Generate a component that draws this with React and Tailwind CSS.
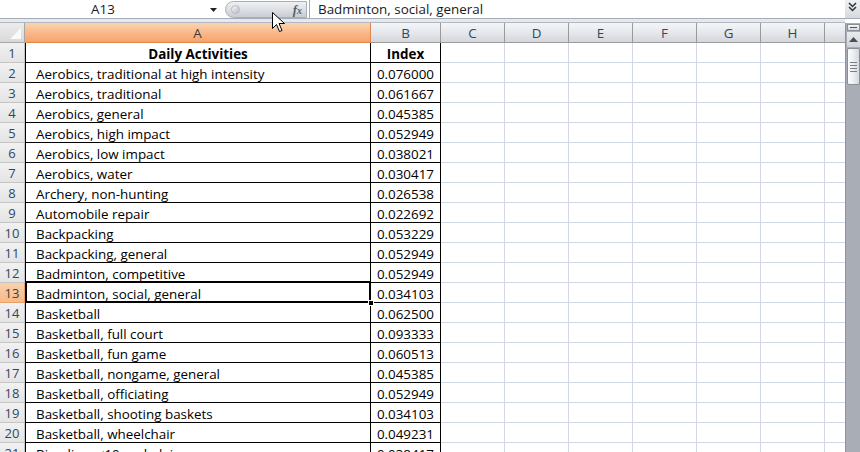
import React from 'react';

const rows = [
  ['Aerobics, traditional at high intensity', '0.076000'],
  ['Aerobics, traditional', '0.061667'],
  ['Aerobics, general', '0.045385'],
  ['Aerobics, high impact', '0.052949'],
  ['Aerobics, low impact', '0.038021'],
  ['Aerobics, water', '0.030417'],
  ['Archery, non-hunting', '0.026538'],
  ['Automobile repair', '0.022692'],
  ['Backpacking', '0.053229'],
  ['Backpacking, general', '0.052949'],
  ['Badminton, competitive', '0.052949'],
  ['Badminton, social, general', '0.034103'],
  ['Basketball', '0.062500'],
  ['Basketball, full court', '0.093333'],
  ['Basketball, fun game', '0.060513'],
  ['Basketball, nongame, general', '0.045385'],
  ['Basketball, officiating', '0.052949'],
  ['Basketball, shooting baskets', '0.034103'],
  ['Basketball, wheelchair', '0.049231'],
  ['Bicycling, <10 mph, leisure', '0.038417'],
];

const emptyCols = ['C', 'D', 'E', 'F', 'G', 'H'];
const font = { fontFamily: "'Open Sans', 'Liberation Sans', sans-serif" };

const RowHead = ({ n, active }) => (
  <div
    className={`w-[25px] shrink-0 h-full flex items-center justify-center pt-[3px] border-r border-b text-[13px] ${
      active
        ? 'bg-gradient-to-b from-[#f9d2ad] to-[#f7b988] border-[#e8a067] text-[#3f3f3f]'
        : 'bg-gradient-to-b from-[#f2f2f2] to-[#e4e4e4] border-[#c4c4c4] text-[#2f4766]'
    }`}
  >
    {n}
  </div>
);

const Blanks = () => (
  <>
    {emptyCols.map((c) => (
      <div key={c} className="w-[64px] shrink-0 h-full border-r border-b border-[#d0d7e5]" />
    ))}
    <div className="w-[20px] shrink-0 h-full border-b border-[#d0d7e5]" />
  </>
);

const FxPill = () => (
  <div className="ml-[3px] w-[82px] h-[17px] mt-[1px] rounded-l-full border border-[#a9afb8] bg-gradient-to-b from-[#eef0f3] via-[#dde0e5] to-[#c9cdd4] flex items-center justify-between pl-[5px] pr-[4px]">
    <span className="w-[9px] h-[9px] rounded-full bg-gradient-to-br from-[#f7f8fa] to-[#b9bdc4] border border-[#b5bac2]" />
    <span className="text-[13px] italic text-[#5a5f66] font-bold" style={{ fontFamily: "'Liberation Serif', serif" }}>
      f<span className="text-[10px]">x</span>
    </span>
  </div>
);

export default function App() {
  return (
    <div className="w-[860px] h-[452px] overflow-hidden bg-white relative select-none text-[13.4px]" style={font}>
      {/* formula bar */}
      <div className="h-[19px] flex border-b border-[#a5acb5]">
        <div className="w-[222px] shrink-0 flex items-center relative">
          <span className="w-full text-center text-[#1a1a1a] pr-[16px]">A13</span>
          <svg className="absolute left-[210px] top-[8px]" width="7" height="4" viewBox="0 0 7 4">
            <path d="M0 0h7L3.5 4z" fill="#222" />
          </svg>
        </div>
        <FxPill />
        <div className="flex-1 ml-[2px] border-l border-[#a5acb5] flex items-center pl-[8px] text-[#1a1a1a]">
          Badminton, social, general
        </div>
        <div className="w-[15px] shrink-0 bg-gradient-to-b from-[#eef0f3] to-[#d6dae0] flex items-start justify-center pt-[1px]">
          <svg width="9" height="12" viewBox="0 0 9 12">
            <path d="M1 2l3.5 3.5L8 2M1 6l3.5 3.5L8 6" stroke="#333" strokeWidth="1.5" fill="none" />
          </svg>
        </div>
      </div>
      <div className="h-[4px] bg-[#e6e9ee] border-b border-[#b3b8c0] mr-[15px]" />

      <div className="flex h-[429px]">
        {/* sheet */}
        <div className="w-[845px] flex flex-col">
          {/* column headers */}
          <div className="h-[20px] flex shrink-0">
            <div className="w-[25px] shrink-0 border-r border-b border-[#a7a7a7] bg-gradient-to-b from-[#ececec] to-[#d9d9d9] relative">
              <svg className="absolute right-[3px] bottom-[3px]" width="11" height="11" viewBox="0 0 11 11">
                <path d="M11 0v11H0z" fill="#fafafa" />
              </svg>
            </div>
            <div className="w-[346px] shrink-0 flex items-center justify-center pt-[1px] border-r border-b border-[#e0874c] bg-gradient-to-b from-[#fcd3b0] via-[#f9b98a] to-[#f6a36b] text-[#3b3b3b]">
              A
            </div>
            <div className="w-[70px] shrink-0 flex items-center justify-center pt-[1px] border-r border-b border-[#9a9a9a] bg-gradient-to-b from-[#f4f5f7] via-[#e6e8ec] to-[#d3d6db] text-[#2f4766]">
              B
            </div>
            {emptyCols.map((c) => (
              <div key={c} className="w-[64px] shrink-0 flex items-center justify-center pt-[1px] border-r border-b border-[#9a9a9a] bg-gradient-to-b from-[#f4f5f7] via-[#e6e8ec] to-[#d3d6db] text-[#2f4766]">
                {c}
              </div>
            ))}
            <div className="w-[20px] shrink-0 border-b border-[#9a9a9a] bg-gradient-to-b from-[#f4f5f7] via-[#e6e8ec] to-[#d3d6db]" />
          </div>

          {/* row 1 */}
          <div className="h-[20px] flex shrink-0 text-black">
            <RowHead n={1} />
            <div className="w-[346px] shrink-0 flex items-center justify-center pt-[3px] border-l border-r border-b border-black font-bold">
              Daily Activities
            </div>
            <div className="w-[70px] shrink-0 flex items-center justify-center pt-[3px] border-r border-b border-black font-bold">
              Index
            </div>
            <Blanks />
          </div>

          {rows.map(([name, val], i) => {
            const n = i + 2;
            const active = n === 13;
            return (
              <div key={n} className="h-[20px] flex shrink-0 text-black">
                <RowHead n={n} active={active} />
                <div className="w-[346px] shrink-0 flex items-center pt-[3px] border-l border-r border-b border-black pl-[10px] relative">
                  {name}
                  {active && (
                    <>
                      <span className="absolute -left-px -top-[2px] -right-px -bottom-px border-2 border-black" />
                      <span className="absolute -right-[4px] -bottom-[4px] w-[6px] h-[6px] bg-black border border-white z-10" />
                    </>
                  )}
                </div>
                <div className="w-[70px] shrink-0 flex items-center justify-end pt-[3px] border-r border-b border-black pr-[6px]">
                  {val}
                </div>
                <Blanks />
              </div>
            );
          })}
        </div>

        {/* vertical scrollbar */}
        <div className="w-[15px] shrink-0 bg-[#a9adb6] border-l border-[#8f949c] flex flex-col items-center">
          <div className="w-[13px] h-[7px] mt-[1px] bg-gradient-to-b from-[#f4f5f7] to-[#d5d8dd] border border-[#8a8f97] flex items-center justify-center">
            <span className="w-[7px] h-px bg-[#555]" />
          </div>
          <div className="w-[13px] h-[15px] mt-[1px] bg-gradient-to-b from-[#e9ebee] to-[#cfd3d9] flex items-center justify-center">
            <svg width="9" height="5" viewBox="0 0 9 5">
              <path d="M0 5L4.5 0 9 5z" fill="#4a4f57" />
            </svg>
          </div>
          <div className="w-[13px] h-[37px] mt-[1px] rounded-[2px] bg-gradient-to-r from-[#fafbfc] via-[#eceef1] to-[#d5d8dd] border border-[#8a8f97] flex flex-col items-center justify-center gap-[2px]">
            <span className="w-[7px] h-px bg-[#7a7f87]" />
            <span className="w-[7px] h-px bg-[#7a7f87]" />
            <span className="w-[7px] h-px bg-[#7a7f87]" />
            <span className="w-[7px] h-px bg-[#7a7f87]" />
          </div>
        </div>
      </div>

      {/* mouse pointer */}
      <svg className="absolute left-[272px] top-[12px]" width="13" height="21" viewBox="0 0 13 21">
        <path d="M0.5 0.5v16l4-4 3 7 2.5-1-3-7h5.5z" fill="#fff" stroke="#000" strokeWidth="1" />
      </svg>
    </div>
  );
}
